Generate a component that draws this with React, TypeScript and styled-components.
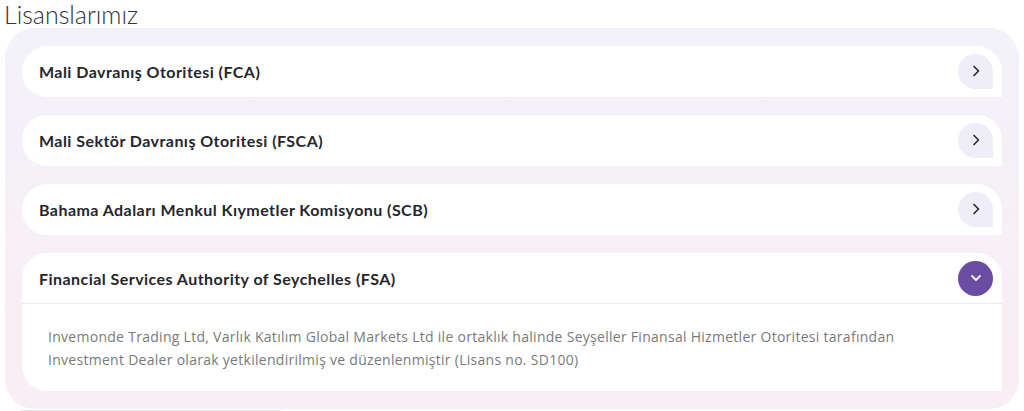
import React, { useState } from 'react'
import styled, { createGlobalStyle } from 'styled-components'

const GlobalStyle = createGlobalStyle`
  body {
    margin: 0;
    background: #ffffff;
    font-family: 'Lato', 'Noto Sans', sans-serif;
  }
`

type License = {
  title: string
  text?: string
}

const licenses: License[] = [
  { title: 'Mali Davranış Otoritesi (FCA)' },
  { title: 'Mali Sektör Davranış Otoritesi (FSCA)' },
  { title: 'Bahama Adaları Menkul Kıymetler Komisyonu (SCB)' },
  {
    title: 'Financial Services Authority of Seychelles (FSA)',
    text:
      'Invemonde Trading Ltd, Varlık Katılım Global Markets Ltd ile ortaklık halinde Seyşeller Finansal Hizmetler Otoritesi tarafından Investment Dealer olarak yetkilendirilmiş ve düzenlenmiştir (Lisans no. SD100)',
  },
]

const Chevron: React.FC<{ open: boolean }> = ({ open }) => (
  <svg width="14" height="14" viewBox="0 0 14 14" fill="none">
    {open ? (
      <path d="M3 5 L7 9 L11 5" stroke="#ffffff" strokeWidth="1.8" strokeLinecap="round" strokeLinejoin="round" />
    ) : (
      <path d="M5 2.5 L9.5 7 L5 11.5" stroke="#2a2a3a" strokeWidth="1.7" strokeLinecap="round" strokeLinejoin="round" />
    )}
  </svg>
)

export default function App() {
  const [openIndex, setOpenIndex] = useState<number>(3)

  return (
    <>
      <GlobalStyle />
      <S.Page>
        <S.Heading>Lisanslarımız</S.Heading>
        <S.Panel>
          {licenses.map((item, i) => {
            const open = openIndex === i
            return (
              <S.Card key={item.title}>
                <S.Header $open={open} onClick={() => setOpenIndex(open ? -1 : i)}>
                  <S.Title>{item.title}</S.Title>
                  <S.Toggle $open={open}>
                    <Chevron open={open} />
                  </S.Toggle>
                </S.Header>
                {open && item.text && <S.Body>{item.text}</S.Body>}
              </S.Card>
            )
          })}
        </S.Panel>
        <S.NextBar />
      </S.Page>
    </>
  )
}

const S = {
  Page: styled.div`
    width: 1024px;
    height: 411px;
    overflow: hidden;
    display: flex;
    flex-direction: column;
  `,
  Heading: styled.h2`
    margin: 0;
    padding: 0 0 0 4px;
    height: 28px;
    font-family: 'Lato', sans-serif;
    font-weight: 300;
    font-size: 25px;
    line-height: 28px;
    color: #333333;
  `,
  Panel: styled.div`
    margin: 0 5px;
    padding: 18px 17px 18px 17px;
    border-radius: 30px;
    background: linear-gradient(180deg, #f3f1fa 0%, #f7f0f6 55%, #f9eef3 100%);
    display: flex;
    flex-direction: column;
    gap: 18px;
  `,
  Card: styled.div`
    background: #ffffff;
    border-radius: 25px 25px 0 25px;
    overflow: hidden;
  `,
  Header: styled.div<{ $open: boolean }>`
    height: 51px;
    box-sizing: border-box;
    padding: 0 9px 0 17px;
    display: flex;
    align-items: center;
    justify-content: space-between;
    cursor: pointer;
    border-bottom: 1px solid ${p => (p.$open ? '#ececec' : 'transparent')};
  `,
  Title: styled.span`
    font-family: 'Lato', sans-serif;
    font-weight: 700;
    font-size: 16px;
    color: #26262c;
    letter-spacing: 0.45px;
  `,
  Toggle: styled.span<{ $open: boolean }>`
    width: 35px;
    height: 35px;
    display: flex;
    align-items: center;
    justify-content: center;
    border-radius: ${p => (p.$open ? '50%' : '50% 50% 0 50%')};
    background: ${p => (p.$open ? '#6b4ca3' : '#efedf7')};
  `,
  Body: styled.p`
    margin: 0;
    padding: 21px 26px 20px 26px;
    max-width: 870px;
    font-family: 'Open Sans', sans-serif;
    font-size: 14px;
    line-height: 23px;
    color: #7a7a7a;
    letter-spacing: 0.28px;
  `,
  NextBar: styled.div`
    margin: 1px 0 0 20px;
    width: 262px;
    height: 8px;
    border-radius: 8px 8px 0 0;
    background: #e6e6e8;
  `,
}
